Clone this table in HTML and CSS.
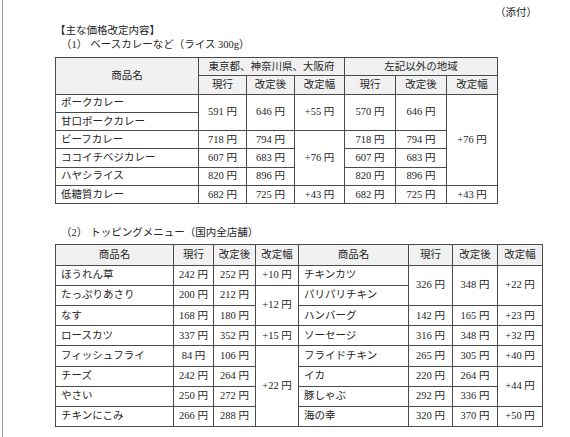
FILE: index.html
```html
<!DOCTYPE html>
<html lang="ja">
<head>
<meta charset="utf-8">
<link rel="stylesheet" href="styles.css">
</head>
<body>
<div class="page">
  <div class="attach">（添付）</div>
  <div class="heading">【主な価格改定内容】</div>
  <div class="sub"><span class="num">（1）</span>ベースカレーなど（ライス 300g）</div>
  <table class="tbl t1">
    <colgroup>
      <col class="c-name1"><col class="c48"><col class="c48"><col class="c50"><col class="c51"><col class="c51"><col class="c51">
    </colgroup>
    <tr class="hd">
      <th rowspan="2">商品名</th>
      <th colspan="3">東京都、神奈川県、大阪府</th>
      <th colspan="3">左記以外の地域</th>
    </tr>
    <tr class="hd">
      <th>現行</th><th>改定後</th><th>改定幅</th>
      <th>現行</th><th>改定後</th><th>改定幅</th>
    </tr>
    <tr>
      <td class="nm">ポークカレー</td>
      <td rowspan="2">591 円</td><td rowspan="2">646 円</td><td rowspan="2">+55 円</td>
      <td rowspan="2">570 円</td><td rowspan="2">646 円</td><td rowspan="5">+76 円</td>
    </tr>
    <tr><td class="nm">甘口ポークカレー</td></tr>
    <tr>
      <td class="nm">ビーフカレー</td><td>718 円</td><td>794 円</td><td rowspan="3">+76 円</td>
      <td>718 円</td><td>794 円</td>
    </tr>
    <tr>
      <td class="nm">ココイチベジカレー</td><td>607 円</td><td>683 円</td>
      <td>607 円</td><td>683 円</td>
    </tr>
    <tr>
      <td class="nm">ハヤシライス</td><td>820 円</td><td>896 円</td>
      <td>820 円</td><td>896 円</td>
    </tr>
    <tr>
      <td class="nm">低糖質カレー</td><td>682 円</td><td>725 円</td><td>+43 円</td>
      <td>682 円</td><td>725 円</td><td>+43 円</td>
    </tr>
  </table>
  <div class="sub sub2"><span class="num">（2）</span>トッピングメニュー（国内全店舗）</div>
  <table class="tbl t2">
    <colgroup>
      <col class="w118"><col class="w40"><col class="w42"><col class="w43"><col class="w110"><col class="w44"><col class="w45"><col class="w45">
    </colgroup>
    <tr class="hd">
      <th>商品名</th><th>現行</th><th>改定後</th><th>改定幅</th>
      <th>商品名</th><th>現行</th><th>改定後</th><th>改定幅</th>
    </tr>
    <tr>
      <td class="nm">ほうれん草</td><td>242 円</td><td>252 円</td><td>+10 円</td>
      <td class="nm">チキンカツ</td><td rowspan="2">326 円</td><td rowspan="2">348 円</td><td rowspan="2">+22 円</td>
    </tr>
    <tr>
      <td class="nm">たっぷりあさり</td><td>200 円</td><td>212 円</td><td rowspan="2">+12 円</td>
      <td class="nm">パリパリチキン</td>
    </tr>
    <tr>
      <td class="nm">なす</td><td>168 円</td><td>180 円</td>
      <td class="nm">ハンバーグ</td><td>142 円</td><td>165 円</td><td>+23 円</td>
    </tr>
    <tr>
      <td class="nm">ロースカツ</td><td>337 円</td><td>352 円</td><td>+15 円</td>
      <td class="nm">ソーセージ</td><td>316 円</td><td>348 円</td><td>+32 円</td>
    </tr>
    <tr>
      <td class="nm">フィッシュフライ</td><td>84 円</td><td>106 円</td><td rowspan="4">+22 円</td>
      <td class="nm">フライドチキン</td><td>265 円</td><td>305 円</td><td>+40 円</td>
    </tr>
    <tr>
      <td class="nm">チーズ</td><td>242 円</td><td>264 円</td>
      <td class="nm">イカ</td><td>220 円</td><td>264 円</td><td rowspan="2">+44 円</td>
    </tr>
    <tr>
      <td class="nm">やさい</td><td>250 円</td><td>272 円</td>
      <td class="nm">豚しゃぶ</td><td>292 円</td><td>336 円</td>
    </tr>
    <tr>
      <td class="nm">チキンにこみ</td><td>266 円</td><td>288 円</td>
      <td class="nm">海の幸</td><td>320 円</td><td>370 円</td><td>+50 円</td>
    </tr>
  </table>
</div>
</body>
</html>
```

FILE: styles.css
```css
html, body {
  margin: 0;
  padding: 0;
  background: #fff;
}
body {
  font-family: "Liberation Serif", "Noto Sans CJK JP", serif;
  color: #252525;
  font-size: 10.5px;
}
.page {
  margin-left: 2px;
  border-left: 1px solid #9a9a9a;
  height: 437px;
  box-sizing: border-box;
  overflow: hidden;
}
.attach {
  text-align: right;
  padding-top: 6px;
  padding-right: 33px;
  line-height: 14px;
  font-size: 10.5px;
}
.heading {
  margin-top: 4px;
  margin-left: 52px;
  line-height: 14px;
}
.sub {
  margin-left: 58px;
  line-height: 14px;
}
.sub .num {
  margin-right: 3px;
}
.sub2 {
  margin-top: 22px;
}
.tbl {
  border-collapse: collapse;
  table-layout: fixed;
  margin-left: 52px;
  margin-top: 5px;
}
.tbl th, .tbl td {
  border: 1px solid #4a4a4a;
  padding: 0;
  text-align: center;
  vertical-align: middle;
  font-weight: 400;
  white-space: nowrap;
  overflow: hidden;
  line-height: 12px;
}
.tbl .hd th {
  background: #f1f1f1;
}
.tbl td.nm {
  text-align: left;
  padding-left: 5px;
}
.t1 { width: 442px; }
.t1 tr { height: 18.3px; }
.c-name1 { width: 143px; }
.c48 { width: 48px; }
.c50 { width: 50px; }
.c51 { width: 51px; }
.t2 { width: 487px; margin-top: 4px; }
.t2 tr { height: 20.2px; }
.w118 { width: 118px; }
.w40 { width: 40px; }
.w42 { width: 42px; }
.w43 { width: 43px; }
.w110 { width: 110px; }
.w44 { width: 44px; }
.w45 { width: 45px; }
```
